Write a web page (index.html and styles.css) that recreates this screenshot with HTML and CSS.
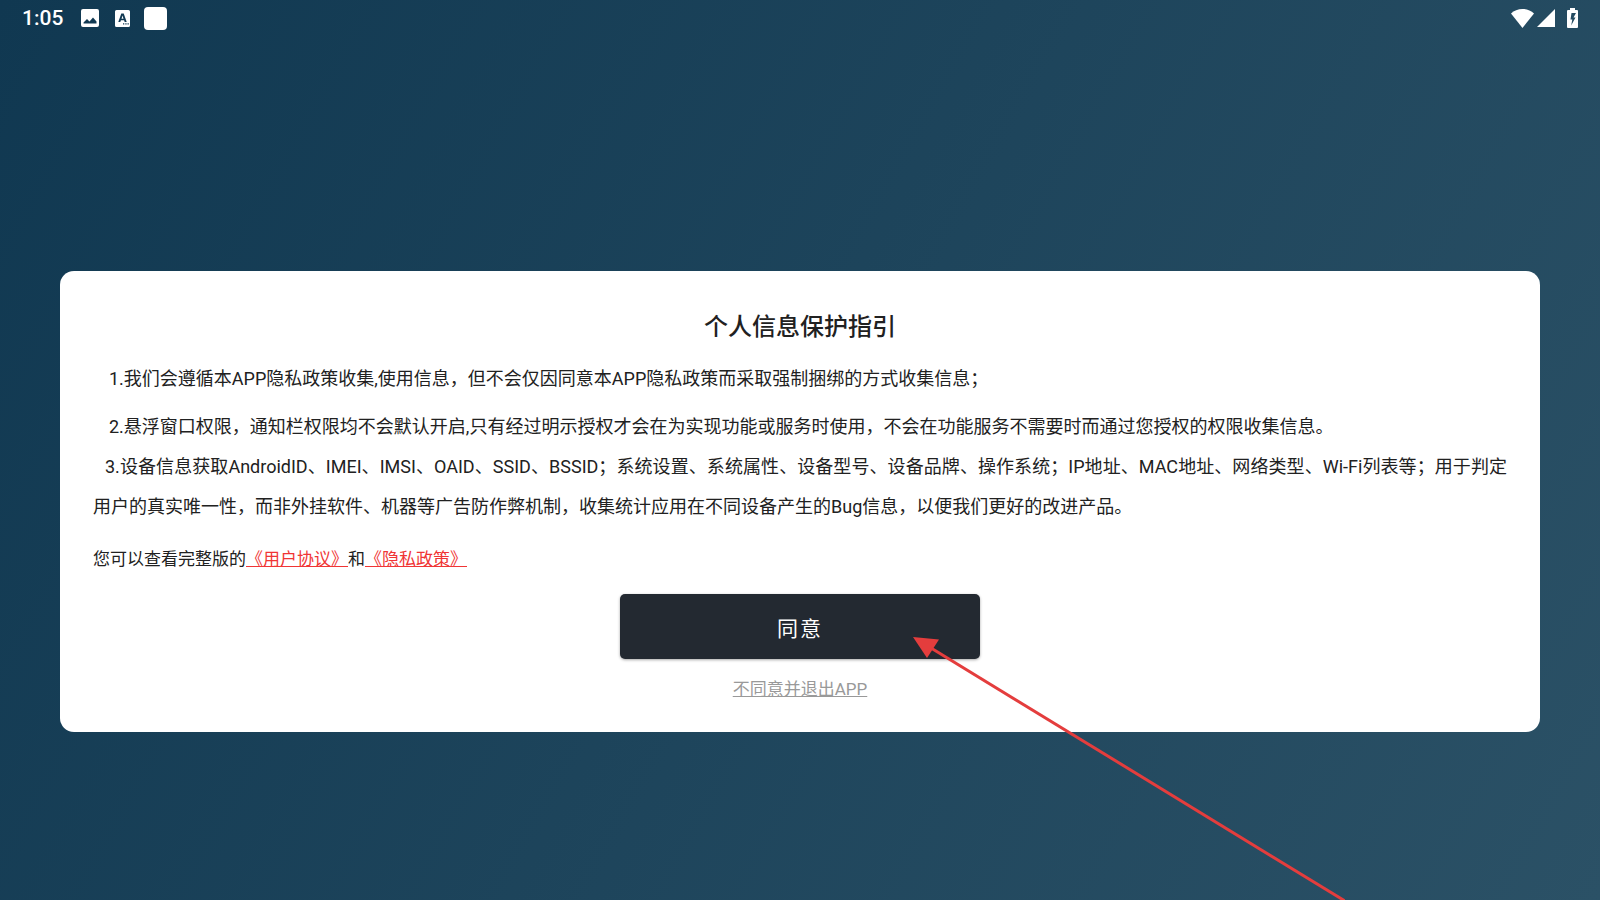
FILE: index.html
```
<!DOCTYPE html>
<html lang="zh-CN">
	<head>
		<meta charset="utf-8">
		<meta name="viewport" content="width=device-width, initial-scale=1">
		<title>个人信息保护指引</title>
		<link rel="stylesheet" href="styles.css">
	</head>
	<body>
		<header class="statusbar">
			<div class="status-left">
				<span class="clock">1:05</span>
				<svg class="icon-picture" width="18" height="18" viewBox="0 0 18 18">
					<path fill="#fff" fill-rule="evenodd" d="M2 0h14a2 2 0 0 1 2 2v14a2 2 0 0 1-2 2H2a2 2 0 0 1-2-2V2a2 2 0 0 1 2-2zM2.500 14.500h13V12.500L12 8.500 8.500 12.500 6 10 2.500 13.500z"/>
				</svg>
				<svg class="icon-input" width="15" height="17" viewBox="0 0 15 17">
					<path fill="#fff" fill-rule="evenodd" d="M1.500 0h12A1.500 1.500 0 0 1 15 1.500v14a1.500 1.500 0 0 1-1.500 1.500h-12A1.500 1.500 0 0 1 0 15.500v-14A1.500 1.500 0 0 1 1.500 0zM6.300 3.500L3.300 12h2l.6-1.800h3.200l.6 1.800h2L8.700 3.500zM7.500 5.500l1 3.200h-2zM8 13.200v1.300h1.300v-1.300zM10.300 13.200v1.300h1.300v-1.300zM12.500 13.200v1.300h1.300v-1.300z"/>
				</svg>
				<span class="icon-blank"></span>
			</div>
			<div class="status-right">
				<svg class="icon-wifi" width="23" height="19" viewBox="0 0 23 19">
					<path fill="#fff" d="M0 4.500C3 1.700 7 0 11.500 0S20 1.700 23 4.500L11.500 19z"/>
				</svg>
				<svg class="icon-signal" width="18" height="18" viewBox="0 0 18 18">
					<path fill="#fff" d="M18 0v18H0z"/>
				</svg>
				<svg class="icon-battery" width="11" height="20" viewBox="0 0 11 20">
					<path fill="#fff" fill-rule="evenodd" d="M3 0h5v2h2a1 1 0 0 1 1 1v16a1 1 0 0 1-1 1H1a1 1 0 0 1-1-1V3a1 1 0 0 1 1-1h2zM4.500 5L3.500 11.500H5.300L4.200 17.500 8.500 9.500H6.500L9 5z"/>
				</svg>
			</div>
		</header>

		<main class="page">
			<section class="dialog">
				<h1 class="title">个人信息保护指引</h1>
				<p class="rule first">1.我们会遵循本APP隐私政策收集,使用信息，但不会仅因同意本APP隐私政策而采取强制捆绑的方式收集信息；</p>
				<p class="rule">2.悬浮窗口权限，通知栏权限均不会默认开启,只有经过明示授权才会在为实现功能或服务时使用，不会在功能服务不需要时而通过您授权的权限收集信息。</p>
				<p class="rule device">3.设备信息获取AndroidID、IMEI、IMSI、OAID、SSID、BSSID；系统设置、系统属性、设备型号、设备品牌、操作系统；IP地址、MAC地址、网络类型、Wi-Fi列表等；用于判定用户的真实唯一性，而非外挂软件、机器等广告防作弊机制，收集统计应用在不同设备产生的Bug信息，以便我们更好的改进产品。</p>
				<p class="links">您可以查看完整版的<a href="#agreement">《用户协议》</a>和<a href="#privacy">《隐私政策》</a></p>
				<button type="button" class="agree">同意</button>
				<button type="button" class="decline">不同意并退出APP</button>
			</section>
		</main>

		<!-- arrow pointing at the agree button -->
		<svg class="arrow" width="432" height="264" viewBox="0 0 432 264">
			<path d="M18 11L432 264" stroke="#e43d3d" stroke-width="3" fill="none"/>
			<path d="M0 0L26 2.500 14 21z" fill="#e43d3d"/>
		</svg>
	</body>
</html>
```
FILE: styles.css
```
* {
	box-sizing: border-box;
}

body {
	margin: 0;
	min-height: 100vh;
	position: relative;
	overflow: hidden;
	background: linear-gradient(119deg, #103851, #2b5166);
	color: #212121;
	font-family: Roboto, "Noto Sans CJK SC", sans-serif;
}

.statusbar {
	display: flex;
	justify-content: space-between;
	align-items: center;
	height: 36px;
	padding: 0 22px;
	color: white;
}

.status-left,
.status-right {
	display: flex;
	align-items: center;
}

.clock {
	font-size: 21px;
	font-weight: 500;
	margin-right: 18px;
}

.icon-picture {
	margin-right: 16px;
}

.icon-input {
	margin-right: 14px;
}

.icon-blank {
	width: 23px;
	height: 23px;
	border-radius: 4px;
	background: white;
}

.icon-wifi {
	margin-right: 3px;
}

.icon-signal {
	margin-right: 12px;
}

.page {
	padding: 235px 60px 0;
}

.dialog {
	display: flex;
	flex-direction: column;
	padding: 38px 33px 31px;
	border-radius: 14px;
	background: white;
}

.title {
	margin: 0 0 14px;
	font-size: 24px;
	font-weight: 500;
	line-height: 36px;
	text-align: center;
}

.rule {
	margin: 0;
	font-size: 18px;
	line-height: 40px;
	text-indent: 16px;
	text-align: justify;
}

.first {
	margin-bottom: 8px;
}

.device {
	text-indent: 12px;
}

.links {
	margin: 20px 0 23px;
	font-size: 17px;
	line-height: 24px;
}

.links a {
	color: #f03535;
}

.agree {
	align-self: center;
	width: 360px;
	height: 65px;
	border: none;
	border-radius: 5px;
	background: #232931;
	box-shadow: 0 1px 3px rgba(0, 0, 0, .35);
	color: white;
	font-family: inherit;
	font-size: 21px;
	letter-spacing: 2px;
	cursor: pointer;
}

.decline {
	align-self: center;
	margin-top: 18px;
	padding: 0;
	border: none;
	background: none;
	color: #999;
	font-family: inherit;
	font-size: 17px;
	line-height: 24px;
	text-decoration: underline;
	cursor: pointer;
}

.arrow {
	position: absolute;
	left: 913px;
	top: 637px;
	pointer-events: none;
}
```
